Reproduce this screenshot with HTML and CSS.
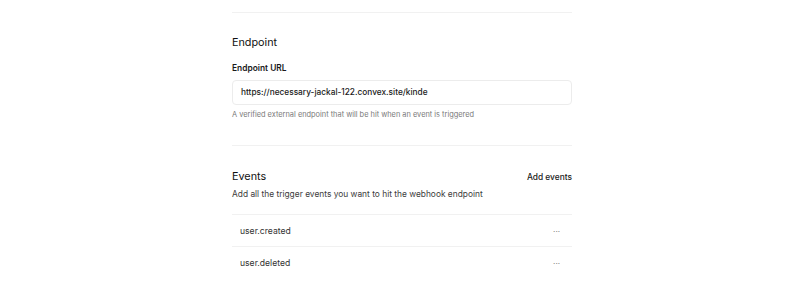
FILE: index.html
```html
<!DOCTYPE html>
<html>
<head>
<meta charset="utf-8">
<link rel="stylesheet" href="styles.css">
</head>
<body>
<main class="page">
  <div class="divider top"></div>
  <section class="section endpoint">
    <h2 class="heading">Endpoint</h2>
    <label class="label">Endpoint URL</label>
    <div class="input">https://necessary-jackal-122.convex.site/kinde</div>
    <p class="help">A verified external endpoint that will be hit when an event is triggered</p>
  </section>
  <div class="divider mid"></div>
  <section class="section events">
    <div class="events-head">
      <h2 class="heading">Events</h2>
      <button class="add">Add events</button>
    </div>
    <p class="desc">Add all the trigger events you want to hit the webhook endpoint</p>
    <ul class="list">
      <li class="row"><span>user.created</span><span class="dots">···</span></li>
      <li class="row"><span>user.deleted</span><span class="dots">···</span></li>
    </ul>
  </section>
</main>
</body>
</html>
```
FILE: styles.css
```css
html, body { margin: 0; padding: 0; background: #fff; }
body { font-family: Inter, "Noto Sans", sans-serif; color: #1b1b1b; padding-left: 4px; }
.page { width: 340px; margin: 0 auto; padding-top: 12px; }
.divider { height: 1px; background: #f1f1f1; }
.section { display: flex; flex-direction: column; }
.endpoint { padding-top: 23px; }
.heading { margin: 0; font-size: 10.8px; font-weight: 400; line-height: 14px; color: #111; }
.label { margin-top: 12px; font-size: 8.4px; font-weight: 600; line-height: 12px; color: #1a1a1a; }
.input { margin-top: 6px; height: 23px; border: 1px solid #ececec; border-radius: 4px; padding: 0 8px; font-size: 8.3px; font-weight: 500; line-height: 23px; color: #1a1a1a; }
.help { margin: 3.5px 0 0; font-size: 7.4px; line-height: 11px; color: #7a7a7a; }
.mid { margin-top: 25.5px; }
.events { padding-top: 24px; }
.events-head { display: flex; justify-content: space-between; align-items: center; height: 14px; }
.add { border: 0; background: none; padding: 0; font-family: inherit; font-size: 8.4px; font-weight: 500; color: #1a1a1a; line-height: 14px; }
.desc { margin: 4.5px 0 0; font-size: 8.4px; line-height: 11px; color: #3d3d3d; }
.list { list-style: none; margin: 14.5px 0 0; padding: 0; }
.row { box-sizing: border-box; display: flex; justify-content: space-between; align-items: center; height: 32px; border-top: 1px solid #f1f1f1; padding: 0 12px 0 8px; font-size: 8.6px; color: #333; }
.dots { font-size: 8px; color: #777; }
```
